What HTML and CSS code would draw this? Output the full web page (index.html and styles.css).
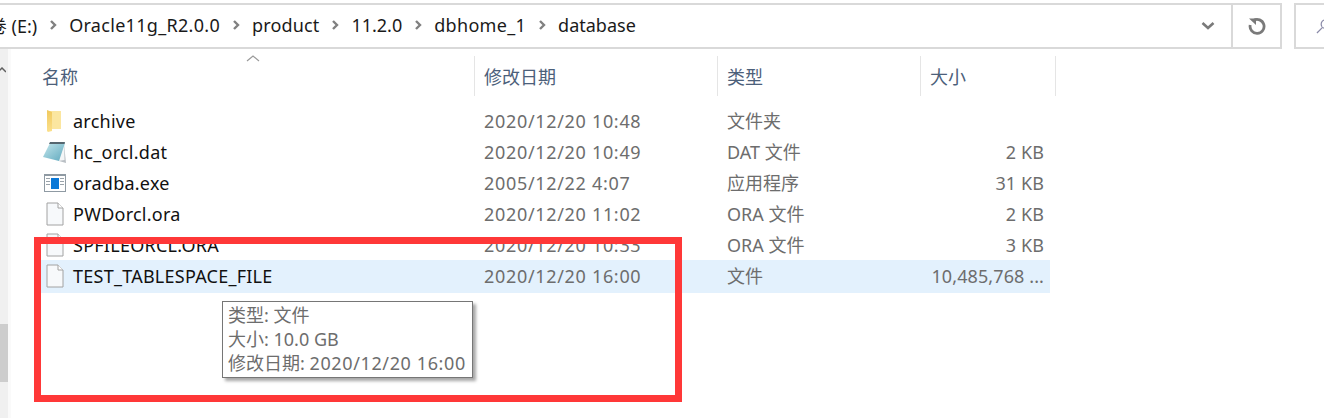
FILE: index.html
```html
<!DOCTYPE html>
<html lang="zh-CN">
<head>
<meta charset="utf-8">
<title>database</title>
<link rel="stylesheet" href="styles.css">
</head>
<body>
<div class="window">
  <div class="toolbar">
    <div class="address">
      <div class="crumbs">
        <span class="drive">卷 (E:)</span>
        <svg class="sep" viewBox="0 0 8 12"><path d="M2 2l4 4-4 4"/></svg>
        <span class="track">Oracle11g_R2.0.0</span>
        <svg class="sep" viewBox="0 0 8 12"><path d="M2 2l4 4-4 4"/></svg>
        <span class="track-sm">product</span>
        <svg class="sep" viewBox="0 0 8 12"><path d="M2 2l4 4-4 4"/></svg>
        <span>11.2.0</span>
        <svg class="sep" viewBox="0 0 8 12"><path d="M2 2l4 4-4 4"/></svg>
        <span class="track">dbhome_1</span>
        <svg class="sep" viewBox="0 0 8 12"><path d="M2 2l4 4-4 4"/></svg>
        <span>database</span>
      </div>
      <svg class="chevron" viewBox="0 0 14 10"><path d="M1.500 2l5.500 5 5.500-5"/></svg>
      <div class="refresh">
        <svg viewBox="0 0 18 18"><path d="M5.500 3.400A7 7 0 1 1 2.200 8"/><path class="fillp" d="M1 1.500h7v6.500z"/></svg>
      </div>
    </div>
    <div class="search">
      <svg viewBox="0 0 16 16"><circle cx="10" cy="6" r="4.500"/><path d="M7 9.500L1 15.500"/></svg>
    </div>
  </div>
  <div class="pane">
    <div class="sidebar">
      <svg class="scroll-up" viewBox="0 0 8 6"><path d="M0 5l4-4 4 4"/></svg>
      <div class="thumb"></div>
    </div>
    <div class="files">
      <div class="head">
        <div class="col-name hcell">名称<svg class="sort" viewBox="0 0 14 7"><path d="M1 6l6-5 6 5"/></svg></div>
        <div class="col-date hcell">修改日期</div>
        <div class="col-type hcell">类型</div>
        <div class="col-size hcell">大小</div>
      </div>
      <div class="rows">
        <div class="row">
          <div class="col-name cell name">
            <svg class="icon" viewBox="0 0 22 24"><defs><linearGradient id="fold" x1="0" y1="0" x2="0" y2="1"><stop offset="0" stop-color="#f0c95e"/><stop offset="1" stop-color="#fbe08c"/></linearGradient></defs><path fill="#fbe6a0" d="M3 2h14v18H3z"/><path fill="url(#fold)" d="M3 1l5 2v19l-4 1-1-1z"/></svg>
            <span>archive</span>
          </div>
          <div class="col-date cell">2020/12/20 10:48</div>
          <div class="col-type cell">文件夹</div>
          <div class="col-size cell size"></div>
        </div>
        <div class="row">
          <div class="col-name cell name">
            <svg class="icon wide" viewBox="0 0 23 24"><defs><linearGradient id="pad" x1="0" y1="0" x2="1" y2="1"><stop offset="0" stop-color="#c4e6ec"/><stop offset="1" stop-color="#5fa9be"/></linearGradient></defs><path fill="#b9bfc4" d="M21 4l2 19-7-2z"/><path fill="#f4f6f7" d="M21 4l.5 16-6.500 1z"/><path fill="url(#pad)" d="M7 3h15l-6 18L0 17z"/><path fill="#55666f" d="M7 2h15l-.5 2H6z"/></svg>
            <span>hc_orcl.dat</span>
          </div>
          <div class="col-date cell">2020/12/20 10:49</div>
          <div class="col-type cell">DAT 文件</div>
          <div class="col-size cell size">2 KB</div>
        </div>
        <div class="row">
          <div class="col-name cell name">
            <svg class="icon" viewBox="0 0 22 18"><path fill="#8f9aa3" d="M0 0h22v18H0z"/><path fill="#fff" d="M1 2h20v15H1z"/><path fill="#0a78d7" d="M7 4h8v11H7z"/><path fill="#9aa3aa" d="M2 4h4v1H2zM2 7h4v1H2zM2 10h4v1H2zM16 4h4v1h-4zM16 7h4v1h-4zM16 10h4v1h-4z"/></svg>
            <span>oradba.exe</span>
          </div>
          <div class="col-date cell">2005/12/22 4:07</div>
          <div class="col-type cell">应用程序</div>
          <div class="col-size cell size">31 KB</div>
        </div>
        <div class="row">
          <div class="col-name cell name">
            <svg class="icon" viewBox="0 0 18 24"><path fill="#f7f9fb" stroke="#a2a2a2" d="M1 1h11l5 5v17H1z"/><path fill="#fff" stroke="#a2a2a2" d="M12 1v5h5"/></svg>
            <span>PWDorcl.ora</span>
          </div>
          <div class="col-date cell">2020/12/20 11:02</div>
          <div class="col-type cell">ORA 文件</div>
          <div class="col-size cell size">2 KB</div>
        </div>
        <div class="row">
          <div class="col-name cell name">
            <svg class="icon" viewBox="0 0 18 24"><path fill="#f7f9fb" stroke="#a2a2a2" d="M1 1h11l5 5v17H1z"/><path fill="#fff" stroke="#a2a2a2" d="M12 1v5h5"/></svg>
            <span>SPFILEORCL.ORA</span>
          </div>
          <div class="col-date cell">2020/12/20 10:33</div>
          <div class="col-type cell">ORA 文件</div>
          <div class="col-size cell size">3 KB</div>
        </div>
        <div class="row hot">
          <div class="col-name cell name">
            <svg class="icon" viewBox="0 0 18 24"><path fill="#f7f9fb" stroke="#a2a2a2" d="M1 1h11l5 5v17H1z"/><path fill="#fff" stroke="#a2a2a2" d="M12 1v5h5"/></svg>
            <span>TEST_TABLESPACE_FILE</span>
          </div>
          <div class="col-date cell">2020/12/20 16:00</div>
          <div class="col-type cell">文件</div>
          <div class="col-size cell size">10,485,768 ...</div>
        </div>
      </div>
    </div>
  </div>
  <div class="tooltip">
    <div>类型: 文件</div>
    <div>大小: 10.0 GB</div>
    <div>修改日期: <span class="stamp">2020/12/20 16:00</span></div>
  </div>
  <div class="annotation"></div>
</div>
</body>
</html>
```
FILE: styles.css
```css
* { box-sizing: border-box; }
html, body { margin: 0; padding: 0; background: #fff; }
body {
  font-family: "Noto Sans", "Noto Sans CJK SC", sans-serif;
  font-size: 18px;
  color: #6d6d6d;
}
.window {
  position: relative;
  width: 1324px;
  height: 418px;
  overflow: hidden;
}
.toolbar {
  display: flex;
  gap: 12px;
  height: 49px;
  padding-top: 3px;
}
.address {
  flex: none;
  display: flex;
  align-items: center;
  width: 1282px;
  border: 2px solid #d9d9d9;
  border-left: 0;
}
.crumbs {
  flex: 1;
  display: flex;
  align-items: center;
  gap: 12px;
  padding-bottom: 2px;
  color: #1a1a1a;
  overflow: hidden;
}
.drive { margin-left: -11.200px; }
.track { letter-spacing: .3px; }
.track-sm { letter-spacing: .15px; }
.sep { width: 8px; height: 12px; flex: none; }
.sep path { fill: none; stroke: #808080; stroke-width: 2.400; }
.chevron { width: 14px; height: 10px; margin-right: 16px; flex: none; }
.chevron path { fill: none; stroke: #7a7a7a; stroke-width: 2.600; }
.refresh {
  flex: none;
  width: 49px;
  height: 100%;
  border-left: 2px solid #d9d9d9;
  display: flex;
  align-items: center;
  justify-content: center;
}
.refresh svg { width: 18px; height: 18px; }
.refresh path { fill: none; stroke: #7a7a7a; stroke-width: 2.800; }
.refresh .fillp { fill: #7a7a7a; stroke: none; }
.search {
  flex: none;
  width: 60px;
  border: 2px solid #d9d9d9;
  border-right: 0;
  display: flex;
  align-items: center;
  padding-left: 20px;
}
.search svg { width: 15px; height: 18px; }
.search circle, .search path { fill: none; stroke: #8a8aa8; stroke-width: 1.300; }
.pane { display: flex; height: 369px; }
.sidebar {
  position: relative;
  width: 11px;
  flex: none;
  background: #f0f0f0;
  border-right: 3px solid #fafafa;
}
.scroll-up { display: block; width: 8px; height: 6px; margin: 18px 0 0 -2px; }
.scroll-up path { fill: none; stroke: #606060; stroke-width: 1.500; }
.thumb {
  position: absolute;
  left: 0;
  top: 275px;
  width: 8px;
  height: 58px;
  background: #cdcdcd;
}
.files { flex: 1; padding-left: 25px; }
.head {
  display: flex;
  height: 40px;
  margin-top: 7px;
  color: #4c607a;
}
.hcell {
  position: relative;
  display: flex;
  align-items: center;
  border-right: 1px solid #e5e5e5;
  height: 40px;
}
.col-name { width: 439px; padding-left: 6px; flex: none; }
.col-date { width: 243px; padding-left: 9px; flex: none; }
.col-type { width: 203px; padding-left: 9px; flex: none; }
.col-size { width: 135px; padding-left: 9px; flex: none; }
.sort {
  position: absolute;
  left: 210px;
  top: -1px;
  width: 14px;
  height: 7px;
}
.sort path { fill: none; stroke: #9a9a9a; stroke-width: 1.200; }
.rows { margin-top: 9px; width: 1014px; }
.row { display: flex; align-items: center; height: 31px; }
.row.hot { height: 33px; padding-bottom: 2px; background: #e3f1fd; }
.cell { white-space: nowrap; line-height: 24px; }
.col-date.cell { letter-spacing: .68px; }
.name { display: flex; align-items: center; color: #111; padding-left: 7px; letter-spacing: .25px; }
.icon { width: 22px; height: 24px; margin: 0 7px 0 1px; flex: none; }
.icon.wide { width: 23px; margin: 0 7px 0 0; }
.size { text-align: right; padding-right: 7px; width: 130px; letter-spacing: .1px; }
.tooltip {
  position: absolute;
  left: 222px;
  top: 301px;
  width: 251px;
  height: 77px;
  padding: 1px 5px;
  background: #fff;
  border: 1px solid #767676;
  box-shadow: 3px 3px 3px rgba(0, 0, 0, .35);
  line-height: 24px;
  white-space: nowrap;
}
.stamp { letter-spacing: .62px; }
.annotation {
  position: absolute;
  left: 34px;
  top: 237px;
  width: 648px;
  height: 165px;
  border: 7px solid #ff3838;
}
```
